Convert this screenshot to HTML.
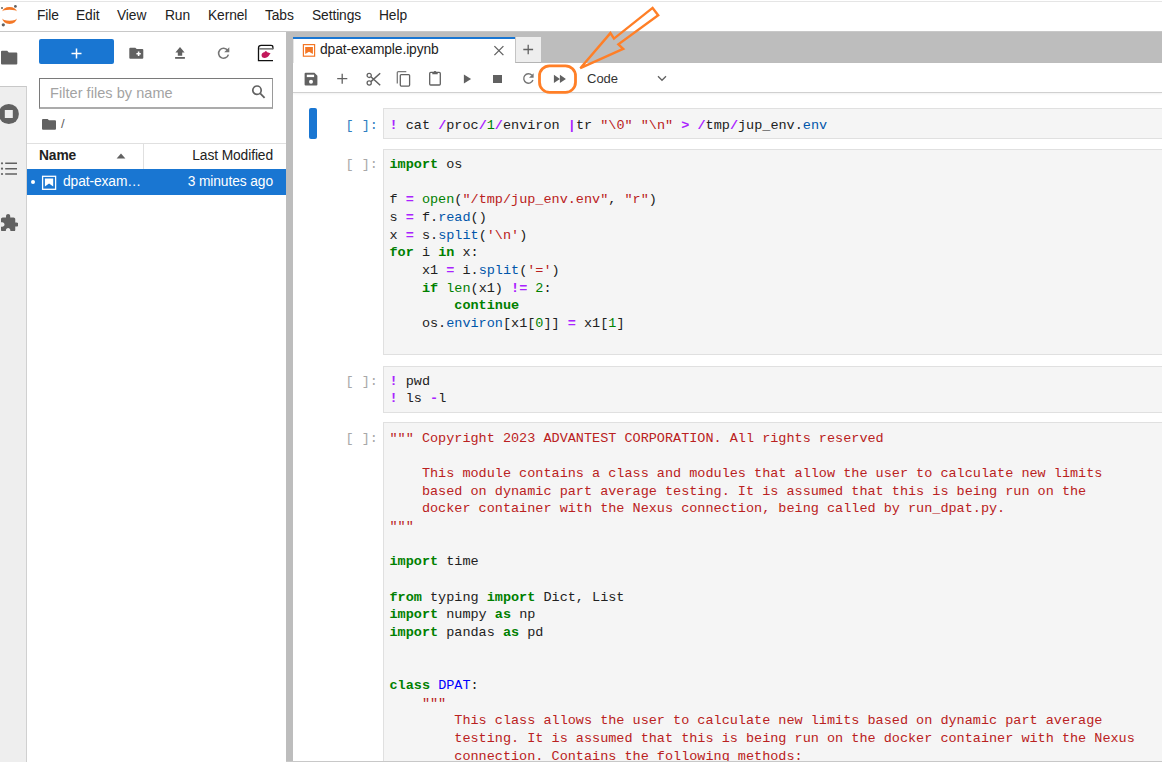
<!DOCTYPE html>
<html><head><meta charset="utf-8"><title>JupyterLab</title>
<style>
*{box-sizing:border-box;margin:0;padding:0}
html,body{width:1162px;height:762px;overflow:hidden;background:#fff;font-family:"Liberation Sans",sans-serif;color:rgba(0,0,0,0.87)}
.a{position:absolute}
.menu{font-size:13.8px;letter-spacing:-0.1px;top:9px;line-height:14px;color:#222}
.code{font-family:"Liberation Mono",monospace;font-size:13.5px;line-height:17.67px;white-space:pre;color:#212121}
.box{position:absolute;left:383px;right:-5px;background:#f5f5f5;border:1px solid #e0e0e0}
.pr{position:absolute;left:345.5px;font-family:"Liberation Mono",monospace;font-size:13.5px;line-height:17.67px;white-space:pre;color:#a8a8a8}
.k{color:#008000;font-weight:bold}
.o{color:#aa22ff;font-weight:bold}
.s{color:#ba2121}
.n{color:#008000}
.b{color:#008000}
.p{color:#0055aa}
.d{color:#0000ff}
</style></head><body>
<!-- top line -->
<div class="a" style="left:0;top:1px;width:1162px;height:1px;background:#e5e5e5"></div>
<!-- menubar bottom border -->
<div class="a" style="left:0;top:31px;width:1162px;height:1px;background:#c8c8c8"></div>

<!-- jupyter logo -->
<svg class="a" style="left:0;top:0" width="22" height="30" viewBox="0 0 22 30">
  <path d="M2.2 11.7A7.35 4.7 0 0 1 16.9 11.7A7.35 1.9 0 0 0 2.2 11.7Z" fill="#f37726"/>
  <path d="M2.2 18.2A7.35 5.7 0 0 0 16.9 18.2A7.35 2.6 0 0 1 2.2 18.2Z" fill="#f37726"/>
  <circle cx="15.4" cy="6.4" r="1.4" fill="#616161"/>
  <circle cx="2" cy="8.1" r="1" fill="#616161"/>
  <circle cx="3.3" cy="24.8" r="1.6" fill="#616161"/>
</svg>

<!-- menu -->
<div class="a menu" style="left:37px">File</div>
<div class="a menu" style="left:76px">Edit</div>
<div class="a menu" style="left:117px">View</div>
<div class="a menu" style="left:165px">Run</div>
<div class="a menu" style="left:208px">Kernel</div>
<div class="a menu" style="left:265px">Tabs</div>
<div class="a menu" style="left:312px">Settings</div>
<div class="a menu" style="left:379px">Help</div>

<!-- left icon sidebar -->
<div class="a" style="left:0;top:86px;width:27px;height:676px;background:#eeeeee;border-right:1px solid #d0d0d0;border-top:1px solid #c8c8c8"></div>
<div class="a" style="left:0;top:32px;width:27px;height:54px;background:#fff"></div>


<!-- sidebar icons -->
<svg class="a" style="left:0;top:50px" width="18" height="15" viewBox="0 0 18 15">
 <path d="M2 0.8h5.2l1.6 1.6h7.5a1 1 0 0 1 1 1v10.1a1 1 0 0 1-1 1H2a1 1 0 0 1-1-1V1.8a1 1 0 0 1 1-1z" fill="#616161"/>
</svg>
<svg class="a" style="left:0;top:103px" width="20" height="22" viewBox="0 0 20 22">
 <circle cx="8.8" cy="11" r="10.1" fill="#616161"/>
 <rect x="4.8" y="7" width="8" height="8" fill="#eeeeee"/>
</svg>
<svg class="a" style="left:0;top:160px" width="18" height="16" viewBox="0 0 18 16">
 <circle cx="2" cy="3.3" r="1.1" fill="#616161"/><circle cx="2" cy="8.7" r="1.1" fill="#616161"/><circle cx="2" cy="14" r="1.1" fill="#616161"/>
 <path d="M5.2 3.3h11.8M5.2 8.7h11.8M5.2 14h11.8" stroke="#616161" stroke-width="1.5"/>
</svg>
<svg class="a" style="left:0.7px;top:213.8px" width="17.6" height="17.7" viewBox="2 1 21 21">
 <path d="M20.5 11H19V7c0-1.1-.9-2-2-2h-4V3.5C13 2.12 11.88 1 10.5 1S8 2.12 8 3.5V5H4c-1.1 0-1.99.9-1.99 2v3.8H3.5c1.49 0 2.7 1.21 2.7 2.7s-1.21 2.7-2.7 2.7H2V20c0 1.1.9 2 2 2h3.8v-1.5c0-1.49 1.21-2.7 2.7-2.7 1.49 0 2.7 1.21 2.7 2.7V22H17c1.1 0 2-.9 2-2v-4h1.5c1.38 0 2.5-1.12 2.5-2.5S21.88 11 20.5 11z" fill="#616161"/>
</svg>

<!-- file browser panel -->
<div class="a" style="left:27px;top:32px;width:259px;height:730px;background:#fff"></div>


<!-- ===== file browser ===== -->
<div class="a" style="left:39px;top:39px;width:75px;height:25px;background:#1976d2;border-radius:2px"></div>
<svg class="a" style="left:70px;top:47px" width="13" height="13" viewBox="0 0 13 13"><path d="M6.5 1.5v10M1.5 6.5h10" stroke="#fff" stroke-width="1.5"/></svg>
<!-- new folder -->
<svg class="a" style="left:129px;top:47px" width="15" height="12" viewBox="0 0 15 12">
 <path d="M1.3 0.7h5l1.4 1.4h5.6a1 1 0 0 1 1 1v7.6a1 1 0 0 1-1 1H1.3a1 1 0 0 1-1-1V1.7a1 1 0 0 1 1-1z" fill="#616161"/>
 <path d="M9.6 4.6v4.4M7.4 6.8h4.4" stroke="#fff" stroke-width="1.6"/>
</svg>
<!-- upload -->
<svg class="a" style="left:174px;top:46px" width="12" height="14" viewBox="0 0 12 14">
 <path d="M6 0.9L1.4 6.4h2.4v3.3h4.4V6.4h2.4z" fill="#616161"/>
 <rect x="1.1" y="11" width="9.8" height="1.8" fill="#616161"/>
</svg>
<!-- refresh -->
<svg class="a" style="left:216px;top:46px" width="15" height="14" viewBox="0 0 15 14">
 <path d="M11.6 4.2A5 5 0 1 0 12.4 8.6" fill="none" stroke="#757575" stroke-width="1.6"/>
 <path d="M13.3 1.2v5.1H8.2z" fill="#757575"/>
</svg>
<!-- extension box icon -->
<svg class="a" style="left:257px;top:44px" width="17" height="18" viewBox="0 0 17 18">
 <path d="M15.9 5.3V3.2Q15.9 1.3 14 1.3H4.2Q1.5 1.3 1.5 4V16.6H16" fill="none" stroke="#111" stroke-width="1.3"/>
 <rect x="2.2" y="4.1" width="13.8" height="1.5" fill="#6f6f6f"/>
 <path d="M4.6 11.8C4.3 9.6 5.8 8.4 7.4 8.3 7.9 7.5 8.7 7 9.5 7.1 9.3 7.6 9.6 8 10.2 8.3 11.3 8.4 12.5 9 13.6 9.6 13 10 12.5 10.8 12 11.6 11 13.3 9.4 14 7.6 14 6 14 4.9 13.2 4.6 11.8Z" fill="#c2185b"/>
</svg>
<!-- filter input -->
<div class="a" style="left:39px;top:78px;width:234px;height:31px;border:1px solid #7a7a7a;border-right-color:#9a9a9a;border-bottom:2px solid #ababab"></div>
<div class="a" style="left:50px;top:86px;font-size:14.5px;line-height:14px;color:#a3a3a3;letter-spacing:0.05px">Filter files by name</div>
<svg class="a" style="left:250px;top:84px" width="16" height="16" viewBox="0 0 16 16">
 <circle cx="7" cy="6.2" r="4.2" fill="none" stroke="#616161" stroke-width="1.7"/>
 <path d="M10.2 9.4L14.6 13.8" stroke="#616161" stroke-width="1.8"/>
</svg>
<!-- breadcrumb -->
<svg class="a" style="left:42px;top:118px" width="15" height="12" viewBox="0 0 15 12">
 <path d="M1 0.9h4.6l1.4 1.4h6a1 1 0 0 1 1 1v7.4a1 1 0 0 1-1 1H1a1 1 0 0 1-1-1V1.9a1 1 0 0 1 1-1z" fill="#616161"/>
</svg>
<div class="a" style="left:61px;top:117px;font-size:13px;line-height:14px;color:#616161">/</div>
<!-- header -->
<div class="a" style="left:27px;top:143px;width:259px;height:1px;background:#e0e0e0"></div>
<div class="a" style="left:143px;top:144px;width:1px;height:25px;background:#e0e0e0"></div>
<div class="a" style="left:39px;top:149px;font-size:13.8px;letter-spacing:-0.1px;line-height:14px;font-weight:bold;color:#222">Name</div>
<svg class="a" style="left:116px;top:152px" width="10" height="7" viewBox="0 0 10 7"><path d="M0.6 6.4L5 1.4l4.4 5z" fill="#616161"/></svg>
<div class="a" style="left:143px;top:149px;width:130px;text-align:right;font-size:13.8px;letter-spacing:-0.1px;line-height:14px;color:#222">Last Modified</div>
<!-- selected row -->
<div class="a" style="left:27px;top:169px;width:259px;height:26px;background:#1976d2"></div>
<div class="a" style="left:31px;top:180.2px;width:4px;height:4px;border-radius:2px;background:#fff"></div>
<svg class="a" style="left:41px;top:174.5px" width="16" height="16" viewBox="0 0 16 16">
 <rect x="1.6" y="1.3" width="13" height="13" fill="none" stroke="#fff" stroke-width="1.3"/>
 <path d="M3.9 3.4h8.3v8L8.05 8.5 3.9 11.4z" fill="#fff"/>
</svg>
<div class="a" style="left:63px;top:175px;font-size:13.8px;letter-spacing:-0.1px;line-height:14px;color:#fff">dpat-exam…</div>
<div class="a" style="left:143px;top:175px;width:130px;text-align:right;font-size:13.8px;letter-spacing:-0.1px;line-height:14px;color:#fff">3 minutes ago</div>

<!-- splitter -->
<div class="a" style="left:286px;top:32px;width:7px;height:730px;background:#bdbdbd"></div>

<!-- tab bar -->
<div class="a" style="left:293px;top:32px;width:869px;height:31px;background:#bdbdbd"></div>

<!-- toolbar -->
<div class="a" style="left:293px;top:63px;width:869px;height:30px;background:#fff;border-bottom:1px solid #d0d0d0;box-shadow:0 1px 2px rgba(0,0,0,0.06)"></div>


<!-- ===== notebook tabs ===== -->
<div class="a" style="left:293px;top:37px;width:222px;height:26px;background:#fff;border-left:1px solid #e6e6e6"></div><div class="a" style="left:293px;top:37px;width:222px;height:2px;background:#1976d2"></div>
<svg class="a" style="left:302px;top:43px" width="14" height="14" viewBox="0 0 14 14">
 <rect x="1.4" y="1.6" width="11.2" height="11.6" fill="none" stroke="#f37726" stroke-width="1.2"/>
 <path d="M3.2 3.9h7.7v7L7.05 8.8 3.2 10.9z" fill="#f37726"/>
</svg>
<div class="a" style="left:320px;top:42.5px;font-size:13.8px;letter-spacing:-0.1px;line-height:14px;color:#222">dpat-example.ipynb</div>
<svg class="a" style="left:493px;top:45px" width="12" height="12" viewBox="0 0 12 12"><path d="M1.4 1.1l9 9M10.4 1.1l-9 9" stroke="#616161" stroke-width="1.3"/></svg>
<div class="a" style="left:515px;top:37px;width:26px;height:26px;background:#eeeeee;border-left:1px solid #c4c4c4;border-bottom:1px solid #b4b4b4"></div>
<svg class="a" style="left:522px;top:44px" width="12" height="12" viewBox="0 0 12 12"><path d="M6.2 0.7v9.6M1.3 5.5h9.8" stroke="#616161" stroke-width="1.3"/></svg>

<!-- ===== toolbar icons ===== -->
<svg class="a" style="left:304px;top:72px" width="14" height="14" viewBox="0 0 14 14">
 <path d="M1.6 0.7h8.8l3 3v8.7a1 1 0 0 1-1 1H1.6a1 1 0 0 1-1-1V1.7a1 1 0 0 1 1-1z" fill="#616161"/>
 <rect x="2.8" y="2.7" width="7.3" height="2.4" fill="#fff"/>
 <circle cx="7" cy="9.8" r="2" fill="#fff"/>
</svg>
<svg class="a" style="left:336px;top:73px" width="12" height="12" viewBox="0 0 12 12"><path d="M6.2 0.7v10.1M1.2 5.7h10.1" stroke="#616161" stroke-width="1.3"/></svg>
<svg class="a" style="left:366px;top:72px" width="15" height="14" viewBox="0 0 15 14">
 <circle cx="3.2" cy="3.4" r="2.1" fill="none" stroke="#616161" stroke-width="1.3"/>
 <circle cx="3.2" cy="11" r="2.1" fill="none" stroke="#616161" stroke-width="1.3"/>
 <path d="M4.9 4.8L14.2 13.2M4.9 9.6L14.2 1.2" stroke="#616161" stroke-width="1.5"/>
</svg>
<svg class="a" style="left:396px;top:71px" width="15" height="16" viewBox="0 0 15 16">
 <path d="M1.3 12.4V1.7a1 1 0 0 1 1-1h8" fill="none" stroke="#7a7a7a" stroke-width="1.3"/>
 <rect x="4.3" y="3.6" width="9.3" height="11.5" rx="1" fill="none" stroke="#616161" stroke-width="1.3"/>
</svg>
<svg class="a" style="left:428px;top:70px" width="14" height="16" viewBox="0 0 14 16">
 <rect x="1.7" y="2.4" width="10.6" height="12.6" rx="1" fill="none" stroke="#616161" stroke-width="1.3"/>
 <path d="M4.3 4.3h5.4V2.3H8.3a1.3 1.3 0 0 0-2.6 0H4.3z" fill="#616161"/>
</svg>
<svg class="a" style="left:463px;top:74px" width="9" height="10" viewBox="0 0 9 10"><path d="M0.9 0.5L8.1 4.95 0.9 9.4z" fill="#616161"/></svg>
<div class="a" style="left:493px;top:74.5px;width:9px;height:8.5px;background:#616161"></div>
<svg class="a" style="left:522px;top:72px" width="13" height="13" viewBox="0 0 13 13">
 <path d="M9.9 3.3A4.7 4.7 0 1 0 10.9 8" fill="none" stroke="#757575" stroke-width="1.4"/>
 <path d="M11.6 1.2v4.6H7z" fill="#757575"/>
</svg>
<svg class="a" style="left:553px;top:74px" width="14" height="10" viewBox="0 0 14 10"><path d="M0.9 0.8L6.9 4.9 0.9 9zM6.9 0.8L12.9 4.9 6.9 9z" fill="#616161"/></svg>
<div class="a" style="left:587px;top:72px;font-size:13px;line-height:14px;color:#333">Code</div>
<svg class="a" style="left:657px;top:75px" width="10" height="8" viewBox="0 0 10 8"><path d="M1 1.3l4 4 4-4" fill="none" stroke="#616161" stroke-width="1.3"/></svg>


<!-- ===== cells ===== -->
<div class="a" style="left:309px;top:108px;width:8px;height:31px;background:#1976d2;border-radius:2px"></div>
<div class="box" style="top:108px;height:31px"></div>
<div class="box" style="top:149px;height:206px"></div>
<div class="box" style="top:366px;height:47px"></div>
<div class="box" style="top:422px;height:400px"></div>
<div class="pr" style="top:116.8px;color:#307fc1">[ ]:</div>
<div class="pr" style="top:155.9px">[ ]:</div>
<div class="pr" style="top:372.7px">[ ]:</div>
<div class="pr" style="top:429.6px">[ ]:</div>
<div class="a code" style="left:389.5px;top:116.80px"><span class="o">!</span> cat <span class="o">/</span>proc<span class="o">/</span><span class="n">1</span><span class="o">/</span>environ <span class="o">|</span>tr <span class="s">"\0"</span> <span class="s">"\n"</span> <span class="o">&gt;</span> <span class="o">/</span>tmp<span class="o">/</span>jup_env.<span class="p">env</span></div>
<div class="a code" style="left:389.5px;top:155.90px"><span class="k">import</span> os

f <span class="o">=</span> <span class="b">open</span>(<span class="s">"/tmp/jup_env.env"</span>, <span class="s">"r"</span>)
s <span class="o">=</span> f.<span class="p">read</span>()
x <span class="o">=</span> s.<span class="p">split</span>(<span class="s">'\n'</span>)
<span class="k">for</span> i <span class="k">in</span> x:
    x1 <span class="o">=</span> i.<span class="p">split</span>(<span class="s">'='</span>)
    <span class="k">if</span> <span class="b">len</span>(x1) <span class="o">!=</span> <span class="n">2</span>:
        <span class="k">continue</span>
    os.<span class="p">environ</span>[x1[<span class="n">0</span>]] <span class="o">=</span> x1[<span class="n">1</span>]</div>
<div class="a code" style="left:389.5px;top:372.70px"><span class="o">!</span> pwd
<span class="o">!</span> ls <span class="o">-</span>l</div>
<div class="a code" style="left:389.5px;top:429.60px"><span class="s">""" Copyright 2023 ADVANTEST CORPORATION. All rights reserved</span>
<span class="s"></span>
<span class="s">    This module contains a class and modules that allow the user to calculate new limits</span>
<span class="s">    based on dynamic part average testing. It is assumed that this is being run on the</span>
<span class="s">    docker container with the Nexus connection, being called by run_dpat.py.</span>
<span class="s">"""</span>

<span class="k">import</span> time

<span class="k">from</span> typing <span class="k">import</span> Dict, List
<span class="k">import</span> numpy <span class="k">as</span> np
<span class="k">import</span> pandas <span class="k">as</span> pd


<span class="k">class</span> <span class="d">DPAT</span>:
    <span class="s">"""</span>
<span class="s">        This class allows the user to calculate new limits based on dynamic part average</span>
<span class="s">        testing. It is assumed that this is being run on the docker container with the Nexus</span>
<span class="s">        connection. Contains the following methods:</span>
<span class="s"></span></div>

<!-- notebook bottom border -->
<div class="a" style="left:286px;top:761px;width:876px;height:1px;background:#c8c8c8"></div>


<!-- ===== annotation ===== -->
<svg class="a" style="left:0;top:0" width="1162" height="762" viewBox="0 0 1162 762">
 <rect x="539.5" y="65.8" width="36" height="26.5" rx="10" ry="10" fill="none" stroke="#ff7f27" stroke-width="2.8"/>
 <path d="M652.6 7.9L658.2 15.2L618.4 44.4L623.2 48.9L580.3 68.2L610.4 33.1L614 38.6Z" fill="none" stroke="#ff7f27" stroke-width="2.4" stroke-linejoin="miter"/>
</svg>
</body></html>
